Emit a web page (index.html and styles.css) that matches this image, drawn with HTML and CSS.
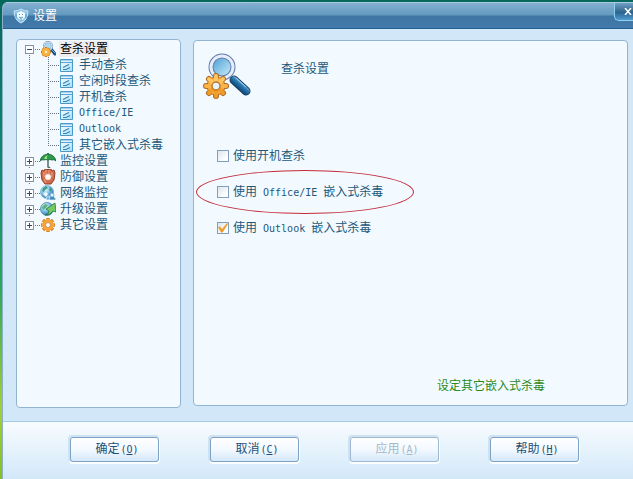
FILE: index.html
```html
<!DOCTYPE html>
<html lang="zh-CN">
<head>
<meta charset="utf-8">
<title>设置</title>
<link rel="stylesheet" href="styles.css">
</head>
<body>
<svg class="defs" aria-hidden="true">
  <defs>
    <linearGradient id="gold" x1="0" y1="0" x2="0" y2="1"><stop offset="0" stop-color="#ffd27a"/><stop offset="1" stop-color="#ee8d14"/></linearGradient>
    <linearGradient id="lens" x1="0" y1="0" x2="1" y2="1"><stop offset="0" stop-color="#4fa0d4"/><stop offset="1" stop-color="#c8ecfa"/></linearGradient>
    <linearGradient id="handle" gradientUnits="userSpaceOnUse" x1="34" y1="37" x2="40" y2="30"><stop offset="0" stop-color="#0c3f70"/><stop offset=".6" stop-color="#2877ae"/><stop offset="1" stop-color="#8cc4e4"/></linearGradient>
    <linearGradient id="sheet" x1="0" y1="0" x2="1" y2="1"><stop offset="0" stop-color="#fff"/><stop offset="1" stop-color="#a8dcf6"/></linearGradient>
    <radialGradient id="globe" cx=".35" cy=".3" r=".75"><stop offset="0" stop-color="#f0faff"/><stop offset=".5" stop-color="#7cc0ea"/><stop offset="1" stop-color="#2a70ab"/></radialGradient>
    <symbol id="scan" viewBox="0 0 48 48">
      <path d="M31 28l12 11" stroke="#153e66" stroke-width="9" stroke-linecap="round"/>
      <path d="M31 28l12 11" stroke="url(#handle)" stroke-width="7" stroke-linecap="round"/>
      <path d="M33 26l10 9" stroke="#a4d4ee" stroke-width="1"/>
      <circle cx="19" cy="15" r="9" fill="url(#lens)"/>
      <circle cx="19" cy="15" r="11" fill="none" stroke="#5d7aa9" stroke-width="5"/>
      <circle cx="19" cy="15" r="11" fill="none" stroke="#e6edfb" stroke-width="3"/>
      <g stroke-linecap="round">
        <path d="M13 24v20M3 34h20M6 27l14 14M20 27L6 41" stroke="#b06d22" stroke-width="6"/>
        <circle cx="13" cy="34" r="9" fill="#f6a93c" stroke="#b06d22"/>
        <path d="M13 24v8M6 27l5 5M20 27l-5 5" stroke="#ffc561" stroke-width="4"/>
        <path d="M3 34h20" stroke="#fbb449" stroke-width="4"/>
        <path d="M13 44v-8M6 41l5-5M20 41l-5-5" stroke="#f09c27" stroke-width="4"/>
      </g>
      <circle cx="13" cy="34" r="4" fill="#e8f2f8" stroke="#ba7a2a" stroke-width="1.500"/>
    </symbol>
    <symbol id="scan-small" viewBox="0 0 16 16">
      <path d="M11 8l4 5" stroke="#174d80" stroke-width="3" stroke-linecap="round"/>
      <path d="M11 8l4 4" stroke="#65b0db" stroke-linecap="round"/>
      <circle cx="8" cy="5" r="4" fill="#a6dcf4" stroke="#8094ba" stroke-width="2"/>
      <circle cx="8" cy="5" r="4" fill="none" stroke="#dce5f5" stroke-width="1"/>
      <path d="M6 6v10M1 11h10M2.500 7.500l7 7M9.500 7.500l-7 7" stroke="#c87c1c" stroke-width="2.500"/>
      <circle cx="6" cy="11" r="4" fill="#f6a830"/>
      <path d="M6 7v8M2 11h8M3 8l6 6M9 8l-6 6" stroke="#f9b544" stroke-width="1.500"/>
      <circle cx="6" cy="11" r="1.200" fill="#fff2cf"/>
    </symbol>
    <symbol id="page" viewBox="0 0 13 13">
      <path d="M.5.5h12v12H.5z" fill="url(#sheet)" stroke="#4a9ac8"/>
      <path d="M1 1.500h11" stroke="#a3d4ee"/><path d="M1 3.500h11" stroke="#5ba5cf"/>
      <path d="M3 8.500l6-3M3 10.500h3l4-2" stroke="#3488bd" stroke-width="1.200"/>
    </symbol>
    <symbol id="umbrella" viewBox="0 0 16 16">
      <path d="M8 7v7q1 1 2 0" fill="none" stroke="#536b6b" stroke-width="1.500"/>
      <path d="M8 0v2" stroke="#145126" stroke-width="1.500"/>
      <path d="M0 8Q1 2 8 1q7 1 8 7-2-2-4-1-2-1-4 0-2-1-4 0-2-1-4 1z" fill="#2c994c" stroke="#126634" stroke-width=".800"/>
      <path d="M4 6q1-3 4-4-2 2-1 4" fill="#a4e88a"/>
    </symbol>
    <symbol id="glove" viewBox="0 0 16 16">
      <path d="M1 4l1-3 2 1 1-2h2l1 1 1-1h2l1 2 2-1 1 3-1 7-3 4H5l-3-4z" fill="#d06a4a" stroke="#93402d" stroke-linejoin="round"/>
      <path d="M4 3v5M6 1v4M9 1v4M12 3v5M4 10l2 4" stroke="#f2ab88" stroke-width=".900"/>
      <circle cx="8" cy="8" r="3" fill="#fff8f3" stroke="#e9c3b0" stroke-width=".500"/>
    </symbol>
    <symbol id="network" viewBox="0 0 16 16">
      <circle cx="7" cy="7" r="6.500" fill="url(#globe)" stroke="#6eabd3" stroke-width=".700"/>
      <path d="M3 3l3-2 2 2-3 2-1 2-2-1zM10 2l2 2-1 3-2-2z" fill="#3d9a8c"/>
      <path d="M3 9l3-2 2 2-2 3z" fill="#effaff"/>
      <path d="M6 15q0-4 3-4t3 4z" fill="#6db0dc" stroke="#e8f6ff" stroke-width=".700"/>
      <path d="M9 15q0-4 3-4t4 4z" fill="#4389bc" stroke="#e8f6ff" stroke-width=".700"/>
      <circle cx="12" cy="10" r="2" fill="#e7f5fc" stroke="#4a91c0" stroke-width=".700"/>
    </symbol>
    <symbol id="update" viewBox="0 0 16 16">
      <circle cx="7" cy="8" r="6.500" fill="url(#globe)" stroke="#38789d" stroke-width=".700"/>
      <path d="M2 6l3-3 3 1-2 3-3 2z" fill="#5cb380"/>
      <path d="M5 14q4-1 4-4L6 8l9-6 1 9-3-1q-2 4-8 4z" fill="#74ca62" stroke="#267744" stroke-width=".800"/>
    </symbol>
    <symbol id="gear" viewBox="0 0 16 16">
      <path d="M8 1v14M1 8h14M3 3l10 10M13 3L3 13" stroke="#d98525" stroke-width="3.500"/>
      <path d="M8 2v12M2 8h12M4 4l8 8M12 4l-8 8" stroke="#fbb34c" stroke-width="2"/>
      <circle cx="8" cy="8" r="4" fill="#fff" stroke="#f7a436" stroke-width="3"/>
      <circle cx="8" cy="8" r="2.500" fill="#f5faff" stroke="#c9782a" stroke-width=".800"/>
    </symbol>
    <symbol id="shield" viewBox="0 0 16 16">
      <path d="M1 3q4 0 7-2 3 2 7 2 0 9-7 12Q1 12 1 3z" fill="#8fc4e6" stroke="#c3e4f6"/>
      <path d="M4 5l2-1 2-1 2 1 2 1v4l-4 4-4-4z" fill="#f2fbff"/>
      <path d="M6 6l1 1M10 6L9 7M6 9l2 1 2-1M8 10v3M3 6v4M13 6v4" fill="none" stroke="#4f95c4"/>
    </symbol>
  </defs>
</svg>

<div class="window">
  <header class="titlebar">
    <svg class="icon"><use href="#shield"/></svg>
    <h1>设置</h1>
    <button class="close" type="button" aria-label="关闭"><svg viewBox="0 0 8 7"><path d="M1 0l6 7M7 0L1 7"/></svg></button>
  </header>

  <div class="content">
    <nav class="panel sidebar">
      <ul class="tree">
        <li class="node">
          <div class="row"><button class="toggle" type="button" aria-label="收起" aria-expanded="true"></button><svg class="icon"><use href="#scan-small"/></svg><a class="current" href="#">查杀设置</a></div>
          <ul class="branch">
            <li><svg class="page"><use href="#page"/></svg><a href="#">手动查杀</a></li>
            <li><svg class="page"><use href="#page"/></svg><a href="#">空闲时段查杀</a></li>
            <li><svg class="page"><use href="#page"/></svg><a href="#">开机查杀</a></li>
            <li><svg class="page"><use href="#page"/></svg><a class="latin" href="#">Office/IE</a></li>
            <li><svg class="page"><use href="#page"/></svg><a class="latin" href="#">Outlook</a></li>
            <li><svg class="page"><use href="#page"/></svg><a href="#">其它嵌入式杀毒</a></li>
          </ul>
        </li>
        <li class="node"><div class="row"><button class="toggle closed" type="button" aria-label="展开" aria-expanded="false"></button><svg class="icon"><use href="#umbrella"/></svg><a href="#">监控设置</a></div></li>
        <li class="node"><div class="row"><button class="toggle closed" type="button" aria-label="展开" aria-expanded="false"></button><svg class="icon"><use href="#glove"/></svg><a href="#">防御设置</a></div></li>
        <li class="node"><div class="row"><button class="toggle closed" type="button" aria-label="展开" aria-expanded="false"></button><svg class="icon"><use href="#network"/></svg><a href="#">网络监控</a></div></li>
        <li class="node"><div class="row"><button class="toggle closed" type="button" aria-label="展开" aria-expanded="false"></button><svg class="icon"><use href="#update"/></svg><a href="#">升级设置</a></div></li>
        <li class="node"><div class="row"><button class="toggle closed" type="button" aria-label="展开" aria-expanded="false"></button><svg class="icon"><use href="#gear"/></svg><a href="#">其它设置</a></div></li>
      </ul>
    </nav>

    <main class="panel details">
      <div class="heading">
        <svg class="hero"><use href="#scan"/></svg>
        <h2>查杀设置</h2>
      </div>
      <div class="options">
        <label><input type="checkbox"><span>使用开机查杀</span></label>
        <label class="circled"><input type="checkbox"><span>使用<span class="latin"> Office/IE </span>嵌入式杀毒</span></label>
        <label><input type="checkbox" checked><span>使用<span class="latin"> Outlook </span>嵌入式杀毒</span></label>
      </div>
      <a class="more" href="#">设定其它嵌入式杀毒</a>
    </main>
  </div>

  <footer class="actions">
    <button type="button">确定<span class="latin">(<u>O</u>)</span></button>
    <button type="button">取消<span class="latin">(<u>C</u>)</span></button>
    <button type="button" disabled>应用<span class="latin">(<u>A</u>)</span></button>
    <button type="button">帮助<span class="latin">(<u>H</u>)</span></button>
  </footer>
</div>
</body>
</html>
```

FILE: styles.css
```css
* {
  box-sizing: border-box;
}

body {
  margin: 0;
  min-height: 100vh;
  padding: 2px 0 0 2px;
  display: flex;
  background: linear-gradient(#07675b 0, #148f70 40%, #2da65a 60%, #a5cf35 85%, #86bf22 100%);
  color: #24587a;
  font: 12px/16px "Liberation Sans", "Noto Sans CJK SC", sans-serif;
}

h1,
h2 {
  margin: 0;
  font-size: 12px;
  font-weight: 400;
}

ul {
  margin: 0;
  padding: 0;
  list-style: none;
}

a {
  color: inherit;
  text-decoration: none;
}

svg {
  display: block;
  flex: none;
  fill: none;
}

.defs {
  position: absolute;
  width: 0;
  height: 0;
}

.latin {
  font-family: "DejaVu Sans Mono", monospace;
  font-size: 10px;
  white-space: pre;
}

.icon {
  width: 16px;
  height: 16px;
}

.window {
  flex: 1;
  display: flex;
  flex-direction: column;
  border-left: 1px solid #8bb0cc;
  border-radius: 6px 0 0 0;
  background: #d2e8f9;
  overflow: hidden;
}

.titlebar {
  display: flex;
  align-items: center;
  gap: 4px;
  height: 27px;
  padding-left: 10px;
  border-top: 1px solid #a9cbe0;
  border-bottom: 1px solid #245f91;
  background: linear-gradient(#83b0d0, #6499bf 48%, #3d75a4 52%, #447aab);
  color: #fff;
}

.close {
  align-self: flex-start;
  display: flex;
  align-items: center;
  width: 19px;
  height: 18px;
  margin-left: auto;
  padding: 0 0 0 9px;
  border: 1px solid #8fd1f0;
  border-width: 0 0 1px 1px;
  border-radius: 0 0 0 5px;
  background: linear-gradient(#6fa0c5, #35698f 50%, #2a6394 55%, #4f9dce);
}

.close svg {
  width: 8px;
  height: 7px;
  stroke: #fff;
  stroke-width: 1.5;
}

.content {
  flex: 1;
  display: grid;
  grid-template-columns: 165px 1fr;
  gap: 12px;
  padding: 10px 5px 13px 13px;
}

.panel {
  border: 1px solid #93b3d0;
  border-radius: 4px;
  background: #f3faff;
}

.sidebar {
  padding: 1px 0 1px 8px;
}

.row,
.branch li {
  display: flex;
  align-items: center;
  height: 16px;
}

.row a {
  margin-left: 3px;
  padding: 0 1px;
}

.row .current {
  background: #eeeef0;
  color: #000;
}

.toggle {
  width: 9px;
  height: 9px;
  padding: 0;
  border: 1px solid #8492a6;
  background: linear-gradient(#30486c, #30486c) center / 5px 1px no-repeat #fff;
}

.toggle.closed {
  background:
    linear-gradient(#30486c, #30486c) center / 5px 1px no-repeat,
    linear-gradient(#30486c, #30486c) center / 1px 5px no-repeat,
    #fff;
}

.row .icon {
  margin-left: 6px;
}

.row {
  background: repeating-linear-gradient(90deg, #66717c 0 1px, transparent 1px 2px) 10px 8px / 5px 1px no-repeat;
}

/* Dotted connector between the expand boxes */
.node:not(:last-child) {
  background: repeating-linear-gradient(#66717c 0 1px, transparent 1px 2px) 4px 14px / 1px 100% no-repeat;
}

.branch {
  padding-left: 23px;
  background: repeating-linear-gradient(#66717c 0 1px, transparent 1px 2px) 23px 0 / 1px calc(100% - 8px) no-repeat;
}

.branch li {
  gap: 6px;
  padding-left: 12px;
  background: repeating-linear-gradient(90deg, #66717c 0 1px, transparent 1px 2px) 0 8px / 11px 1px no-repeat;
}

.page {
  width: 13px;
  height: 13px;
}

.details {
  display: flex;
  flex-direction: column;
  margin: 1px 0 2px;
  padding: 11px 9px;
}

.heading {
  display: flex;
  gap: 30px;
}

.heading h2 {
  padding-top: 9px;
}

.hero {
  width: 48px;
  height: 48px;
}

.options {
  display: flex;
  flex-direction: column;
  align-items: flex-start;
  gap: 20px;
  padding: 48px 14px;
}

.options label {
  position: relative;
  display: flex;
  align-items: center;
  gap: 4px;
  height: 16px;
}

.options input {
  appearance: none;
  width: 12px;
  height: 12px;
  margin: 0;
  border: 1px solid #7f9fba;
  background: linear-gradient(135deg, #dde5ef, #fff 80%);
}

.options input:checked::before {
  content: "";
  display: block;
  width: 10px;
  height: 10px;
  background: #ee9d28;
  clip-path: polygon(0 40%, 20% 35%, 40% 60%, 90% 0, 100% 10%, 45% 95%, 30% 95%);
}

/* Ring around the highlighted option */
.circled::after {
  content: "";
  position: absolute;
  inset: -14px -31px -14px -21px;
  border: 1px solid #c52b38;
  border-radius: 50%;
  pointer-events: none;
}

.more {
  align-self: flex-end;
  margin: auto 73px 0 0;
  color: #2d8a1d;
}

.actions {
  display: flex;
  gap: 50px;
  padding: 15px 50px 17px 67px;
  border-top: 1px solid #a5cae3;
  background: linear-gradient(#f8fcff, #d2e8f9);
}

.actions button {
  width: 89px;
  margin-right: 1px;
  height: 25px;
  padding: 0 0 0 5px;
  border: 1px solid #7fa3c4;
  border-radius: 3px;
  background: linear-gradient(#fff, #f3f9ff 50%, #d5e8f9);
  box-shadow: -1px -1px 0 1px #cfe2f1, 0 1px 0 1px #fbfdff;
  color: #1f4f75;
  font: inherit;
}

.actions button .latin {
  margin-left: 1px;
}

.actions button:disabled {
  border-color: #9db8d0;
  color: #a5b9ca;
}
```
